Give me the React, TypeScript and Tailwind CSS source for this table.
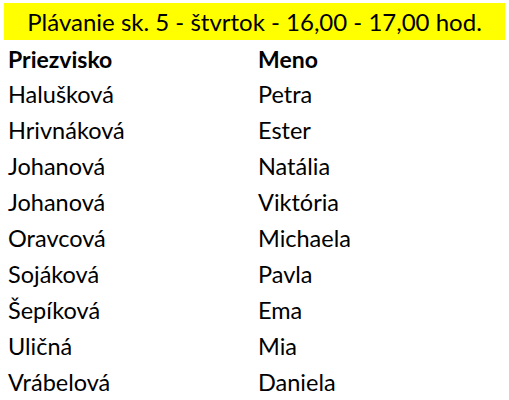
import { Fragment } from "react";

const rows = [
  ["Halušková", "Petra"],
  ["Hrivnáková", "Ester"],
  ["Johanová", "Natália"],
  ["Johanová", "Viktória"],
  ["Oravcová", "Michaela"],
  ["Sojáková", "Pavla"],
  ["Šepíková", "Ema"],
  ["Uličná", "Mia"],
  ["Vrábelová", "Daniela"],
];

export default function App() {
  return (
    <div className="w-[509px] h-[400px] bg-white overflow-hidden pt-[3px] px-[4px] text-black font-['Lato','Liberation_Sans',sans-serif]">
      <div className="h-[37px] bg-[#ffff00] flex items-center justify-center text-[24px]">
        Plávanie sk. 5 - štvrtok - 16,00 - 17,00 hod.
      </div>
      <div className="grid grid-cols-[250px_1fr] pl-[4px] pt-[1px] text-[23.5px]">
        <div className="h-[36px] flex items-center font-bold text-[23px]">Priezvisko</div>
        <div className="h-[36px] flex items-center font-bold text-[23px]">Meno</div>
        {rows.map(([a, b], i) => (
          <Fragment key={i}>
            <div className="h-[36px] flex items-center">{a}</div>
            <div className="h-[36px] flex items-center">{b}</div>
          </Fragment>
        ))}
      </div>
    </div>
  );
}
